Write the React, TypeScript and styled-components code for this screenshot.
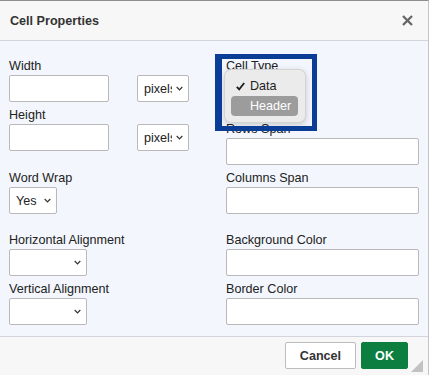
import React from "react";
import styled, { createGlobalStyle } from "styled-components";

const GlobalStyle = createGlobalStyle`
  html, body { margin: 0; padding: 0; background: #f7f7f7; }
  body { font-family: "Liberation Sans", Arial, Helvetica, sans-serif; }
  * { box-sizing: border-box; }
`;

const Dialog = styled.div`
  width: 429px;
  height: 375px;
  display: flex;
  flex-direction: column;
  border-top: 1px solid #8e8e8e;
  border-right: 1px solid #c4c4c4;
  position: relative;
  overflow: hidden;
`;

const Header = styled.div`
  height: 40px;
  flex: none;
  display: flex;
  align-items: center;
  justify-content: space-between;
  padding: 0 15px 0 10px;
  background: #f7f7f7;
  border-bottom: 1px solid #d2d6dc;
`;

const Title = styled.div`
  font-size: 12.6px;
  font-weight: bold;
  color: #333;
  padding-top: 1px;
`;

const CloseButton = styled.button`
  border: 0;
  background: none;
  padding: 0;
  width: 12px;
  height: 12px;
  display: flex;
  align-items: center;
  justify-content: center;
  cursor: pointer;
`;

const Body = styled.div`
  flex: 1;
  background: #f3f6fc;
  display: grid;
  grid-template-columns: 217px 193px;
  align-content: start;
  padding: 18px 0 0 9px;
`;

const Column = styled.div`
  display: flex;
  flex-direction: column;
`;

const Field = styled.div<{ $mt?: number }>`
  position: relative;
  margin-top: ${(p) => p.$mt ?? 0}px;
  display: flex;
  flex-direction: column;
`;

const Label = styled.label`
  font-size: 12.6px;
  line-height: 14px;
  height: 16px;
  padding-bottom: 2px;
  color: #222;
`;

const Row = styled.div`
  display: flex;
  align-items: center;
  gap: 28px;
`;

const TextInput = styled.input<{ $w: number }>`
  width: ${(p) => p.$w}px;
  height: 27px;
  border: 1px solid #b9b9b9;
  border-radius: 2px;
  background: #fff;
  margin: 0;
  padding: 0 6px;
  font: inherit;
  font-size: 12.6px;
`;

const SelectBox = styled.div<{ $w: number }>`
  width: ${(p) => p.$w}px;
  height: 27px;
  border: 1px solid #b9b9b9;
  border-radius: 2px;
  background: #fff;
  display: flex;
  align-items: center;
  padding: 0 5px 0 6px;
  gap: 4px;
  font-size: 12.6px;
  color: #222;
`;

const SelectValue = styled.span`
  flex: 1;
  overflow: hidden;
  white-space: nowrap;
`;

const Popup = styled.div`
  position: absolute;
  left: -2px;
  top: 10px;
  width: 82px;
  height: 54px;
  padding: 6px 7px 6px 6px;
  background: #ebebeb;
  border: 1px solid rgba(0, 0, 0, 0.1);
  border-radius: 7px;
  box-shadow: 0 2px 7px rgba(0, 0, 0, 0.18);
  display: flex;
  flex-direction: column;
  z-index: 2;
`;

const PopupItem = styled.div<{ $active?: boolean }>`
  position: relative;
  height: 21px;
  display: flex;
  align-items: center;
  padding-left: 19px;
  font-size: 12.6px;
  border-radius: 4px;
  background: ${(p) => (p.$active ? "#9c9c9c" : "transparent")};
  color: ${(p) => (p.$active ? "#fff" : "#1e1e1e")};
`;

const Check = styled.svg`
  position: absolute;
  left: 5px;
  top: 6px;
`;

const FocusFrame = styled.div`
  position: absolute;
  left: -11px;
  top: -5px;
  width: 102px;
  height: 77px;
  border: 5px solid #0a3d96;
  border-left-width: 7px;
  z-index: 3;
  pointer-events: none;
`;

const Footer = styled.div`
  height: 39px;
  flex: none;
  background: #f7f7f7;
  border-top: 1px solid #d2d6dc;
  display: flex;
  justify-content: flex-end;
  align-items: flex-start;
  padding: 5px 20px 0 0;
  gap: 5px;
`;

const Button = styled.button<{ $primary?: boolean }>`
  height: 27px;
  margin: 0;
  padding: 0 ${(p) => (p.$primary ? 13 : 14)}px;
  font-family: inherit;
  font-size: 12.6px;
  font-weight: bold;
  border-radius: 2px;
  cursor: pointer;
  border: 1px solid ${(p) => (p.$primary ? "#0c7f40" : "#bdbdbd")};
  background: ${(p) => (p.$primary ? "#0c7f40" : "#fff")};
  color: ${(p) => (p.$primary ? "#fff" : "#333")};
`;

const Grip = styled.svg`
  position: absolute;
  right: 5px;
  bottom: 3px;
`;

const Chevron = () => (
  <svg width="7" height="5" viewBox="0 0 7 5" style={{ flex: "none" }}>
    <path d="M0.7 1 L3.5 3.8 L6.3 1" fill="none" stroke="#333" strokeWidth="1.2" />
  </svg>
);

const Select = ({ w, value }: { w: number; value?: string }) => (
  <SelectBox $w={w}>
    <SelectValue>{value ?? ""}</SelectValue>
    <Chevron />
  </SelectBox>
);

export default function App() {
  return (
    <>
      <GlobalStyle />
      <Dialog>
        <Header>
          <Title>Cell Properties</Title>
          <CloseButton aria-label="Close">
            <svg width="11" height="11" viewBox="0 0 11 11">
              <path d="M1 1 L10 10 M10 1 L1 10" stroke="#666" strokeWidth="2.3" />
            </svg>
          </CloseButton>
        </Header>
        <Body>
          <Column>
            <Field>
              <Label>Width</Label>
              <Row>
                <TextInput $w={100} />
                <Select w={52} value="pixels" />
              </Row>
            </Field>
            <Field $mt={6}>
              <Label>Height</Label>
              <Row>
                <TextInput $w={100} />
                <Select w={52} value="pixels" />
              </Row>
            </Field>
            <Field $mt={20}>
              <Label>Word Wrap</Label>
              <Select w={48} value="Yes" />
            </Field>
            <Field $mt={19}>
              <Label>Horizontal Alignment</Label>
              <Select w={78} />
            </Field>
            <Field $mt={6}>
              <Label>Vertical Alignment</Label>
              <Select w={78} />
            </Field>
          </Column>
          <Column>
            <Field>
              <Label>Cell Type</Label>
              <Select w={76} />
              <Popup>
                <PopupItem>
                  <Check width="9" height="9" viewBox="0 0 9 9">
                    <path d="M0.8 4.8 L3.2 7.4 L8.2 1" fill="none" stroke="#1e1e1e" strokeWidth="1.8" />
                  </Check>
                  Data
                </PopupItem>
                <PopupItem $active>Header</PopupItem>
              </Popup>
              <FocusFrame />
            </Field>
            <Field $mt={20}>
              <Label>Rows Span</Label>
              <TextInput $w={193} />
            </Field>
            <Field $mt={6}>
              <Label>Columns Span</Label>
              <TextInput $w={193} />
            </Field>
            <Field $mt={19}>
              <Label>Background Color</Label>
              <TextInput $w={193} />
            </Field>
            <Field $mt={6}>
              <Label>Border Color</Label>
              <TextInput $w={193} />
            </Field>
          </Column>
        </Body>
        <Footer>
          <Button>Cancel</Button>
          <Button $primary>OK</Button>
        </Footer>
        <Grip width="12" height="12" viewBox="0 0 12 12">
          <polygon points="12,0 12,12 0,12" fill="#c2c2c2" />
        </Grip>
      </Dialog>
    </>
  );
}
